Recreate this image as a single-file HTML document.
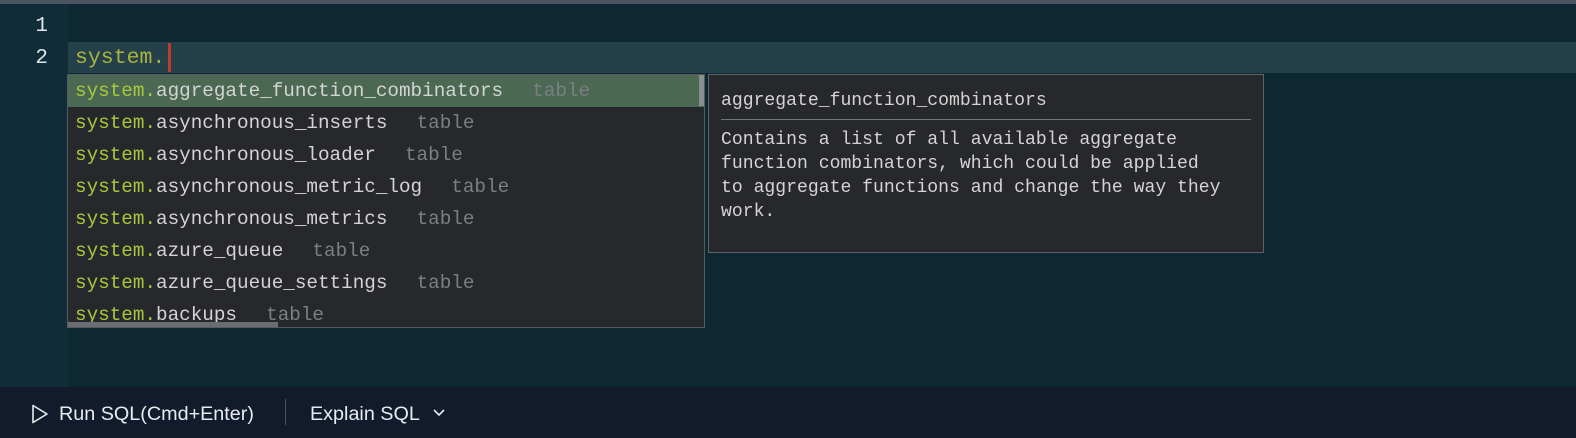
<!DOCTYPE html>
<html><head><meta charset="utf-8"><style>
*{margin:0;padding:0;box-sizing:border-box}
body{width:1576px;height:438px;overflow:hidden;background:#0d2833;position:relative;font-family:"Liberation Mono",monospace}
.top{position:absolute;left:0;top:0;width:1576px;height:4px;background:#4a5560}
.gut{position:absolute;left:0;top:4px;width:68px;height:383px;background:#0f2c38}
.ln{position:absolute;width:48px;text-align:right;color:#e0e6ea;font-size:21px;left:0}
.hl{position:absolute;left:68px;top:42px;width:1508px;height:31px;background:#24404b}
.code{position:absolute;left:75px;top:43px;font-size:21.5px;color:#a8b53a;line-height:30px}
.cur{position:absolute;left:168px;top:43px;width:3px;height:29px;background:#c0392b}
.dd{position:absolute;left:67px;top:74px;width:638px;height:254px;background:#27282b;border:1px solid #555a5e;overflow:hidden}
.row{height:32px;line-height:32px;padding-left:7px;font-size:19.3px;color:#d4d4d4;white-space:pre}
.row.sel{background:#4a6852}
.row b{font-weight:normal;color:#a9c93c}
.row i{font-style:normal;color:#7b7f83;margin-left:6px}
.sb{position:absolute;right:0;top:0;width:5px;height:31px;background:#8a8f92}
.hs{position:absolute;left:0;bottom:0;width:210px;height:5px;background:#6a6e72}
.doc{position:absolute;left:708px;top:74px;width:556px;height:179px;background:#27282b;border:1px solid #5d6468;padding:0 12px;color:#d4d4d4;font-size:18.1px}
.doc .t{height:43px;line-height:52px}
.doc hr{border:0;border-top:1px solid #70777b;margin:1px 0 8px}
.doc p{line-height:24px}
.bar{position:absolute;left:0;top:387px;width:1576px;height:51px;background:#111b2b;font-family:"Liberation Sans",sans-serif;color:#e8ebef;font-size:19px}
</style></head><body>
<div class="top"></div>
<div class="gut"></div>
<div class="hl"></div>
<div class="ln" style="top:15px">1</div>
<div class="ln" style="top:47px">2</div>
<div class="code">system.</div>
<div class="cur"></div>
<div class="dd">
<div class="row sel"><b>system.</b>aggregate_function_combinators  <i>table</i></div>
<div class="row"><b>system.</b>asynchronous_inserts  <i>table</i></div>
<div class="row"><b>system.</b>asynchronous_loader  <i>table</i></div>
<div class="row"><b>system.</b>asynchronous_metric_log  <i>table</i></div>
<div class="row"><b>system.</b>asynchronous_metrics  <i>table</i></div>
<div class="row"><b>system.</b>azure_queue  <i>table</i></div>
<div class="row"><b>system.</b>azure_queue_settings  <i>table</i></div>
<div class="row"><b>system.</b>backups  <i>table</i></div>
<div class="sb"></div><div class="hs"></div>
</div>
<div class="doc">
<div class="t">aggregate_function_combinators</div>
<hr>
<p>Contains a list of all available aggregate<br>function combinators, which could be applied<br>to aggregate functions and change the way they<br>work.</p>
</div>
<div class="bar">
<svg style="position:absolute;left:31px;top:17px" width="18" height="20" viewBox="0 0 18 20"><path d="M2 1.5 L16 10 L2 18.5 Z" fill="none" stroke="#e8ebef" stroke-width="1.6" stroke-linejoin="round"/></svg>
<span style="position:absolute;left:59px;top:17px;transform:scaleX(1.04);transform-origin:left">Run SQL(Cmd+Enter)</span>
<div style="position:absolute;left:285px;top:12px;width:1px;height:26px;background:#4a5262"></div>
<span style="position:absolute;left:310px;top:17px;transform:scaleX(1.04);transform-origin:left">Explain SQL</span>
<svg style="position:absolute;left:432px;top:21px" width="14" height="10" viewBox="0 0 14 10"><path d="M2 2 L7 7 L12 2" fill="none" stroke="#e8ebef" stroke-width="1.6"/></svg>
</div>
</body></html>
